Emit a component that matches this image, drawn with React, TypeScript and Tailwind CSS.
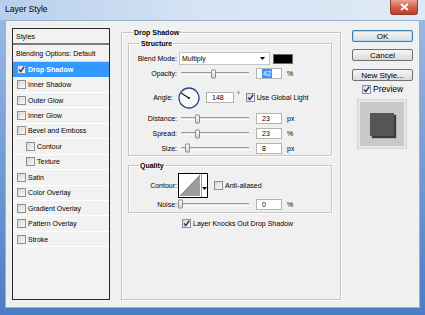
import React from "react";

const font = "font-['Liberation_Sans',Arial,sans-serif]";

function Check({ checked }: { checked?: boolean }) {
  return (
    <span className="flex h-[9px] w-[9px] shrink-0 items-center justify-center border border-[#8e8f8f] bg-gradient-to-br from-[#d6d6d6] to-[#fbfbfb]">
      {checked ? (
        <svg width="7" height="7" viewBox="0 0 7 7">
          <path d="M1 3.6 L2.8 5.6 L6.2 0.8" stroke="#22398c" strokeWidth="1.5" fill="none" />
        </svg>
      ) : null}
    </span>
  );
}

const styleItems = [
  { label: "Drop Shadow", checked: true, active: true },
  { label: "Inner Shadow" },
  { label: "Outer Glow" },
  { label: "Inner Glow" },
  { label: "Bevel and Emboss" },
  { label: "Contour", indent: true },
  { label: "Texture", indent: true },
  { label: "Satin" },
  { label: "Color Overlay" },
  { label: "Gradient Overlay" },
  { label: "Pattern Overlay" },
  { label: "Stroke" },
];

function StylesPanel() {
  return (
    <div className="flex h-[272px] w-[98px] shrink-0 flex-col border border-[#2b2b2b] bg-[#f2f2f2]">
      <div className="flex h-[16px] shrink-0 items-center border-b-2 border-[#7a7a7a] pl-[3px]">Styles</div>
      <div className="flex h-[17px] shrink-0 items-center border-b border-[#d9d9d9] pl-[3px]">Blending Options: Default</div>
      {styleItems.map((item) => (
        <div
          key={item.label}
          className={
            "flex h-[15.45px] shrink-0 items-center gap-[2px] " +
            (item.indent ? "pl-[13px] " : "pl-[4px] ") +
            (item.active ? "bg-[#3399ff] font-bold text-white" : "border-b border-white")
          }
        >
          <Check checked={item.checked} />
          <span>{item.label}</span>
        </div>
      ))}
    </div>
  );
}

function Slider({ pos }: { pos: number }) {
  return (
    <div className="relative flex h-full w-[72px] items-center px-[2px]">
      <div className="h-[3px] w-full border-t border-[#9a9a9a] border-b border-b-white bg-[#e4e4e4]" />
      <div
        className="absolute top-1/2 h-[9px] w-[5px] -translate-y-1/2 rounded-[1px] border border-[#8a8a8a] bg-gradient-to-b from-[#fdfdfd] to-[#d5d5d5]"
        style={{ left: pos }}
      />
    </div>
  );
}

function NumberBox({ value, width = 26, selected }: { value: string; width?: number; selected?: boolean }) {
  return (
    <div
      className="flex h-[11px] shrink-0 items-center border border-[#b3b3b3] bg-white pl-[5px] leading-[9px]"
      style={{ width }}
    >
      <span className={selected ? "bg-[#3399ff] px-[1px] text-white" : ""}>{value}</span>
    </div>
  );
}

function Label({ children, w = 48 }: { children: string; w?: number }) {
  return (
    <div className="shrink-0 text-right" style={{ width: w }}>
      {children}
    </div>
  );
}

function SliderRow({ label, pos, value, unit, h = 15 }: { label: string; pos: number; value: string; unit: string; h?: number }) {
  return (
    <div className="flex items-center" style={{ height: h }}>
      <Label>{label}</Label>
      <div className="ml-[2px] h-full">
        <Slider pos={pos} />
      </div>
      <div className="ml-[5px]">
        <NumberBox value={value} selected={label === "Opacity:"} />
      </div>
      <span className="ml-[5px]">{unit}</span>
    </div>
  );
}

const groupBox = "border border-[#c6c6c6] shadow-[inset_1px_1px_0_#fff,1px_1px_0_#fff]";

function DropShadowPanel() {
  return (
    <fieldset className={`ml-[11px] h-[272px] w-[220px] shrink-0 ${groupBox}`}>
      <legend className="ml-[11px] px-[1px] font-bold leading-[9px]">Drop Shadow</legend>

      <fieldset className={`ml-[6px] mt-[2px] w-[204px] pt-[3px] ${groupBox}`}>
        <legend className="ml-[11px] px-[1px] font-bold leading-[9px]">Structure</legend>

        <div className="flex h-[15px] items-center">
          <Label>Blend Mode:</Label>
          <div className="ml-[2px] flex h-[13px] w-[91px] items-center justify-between border border-[#c4c4c4] bg-white pl-[2px] pr-[4px]">
            <span>Multiply</span>
            <svg width="5" height="3" viewBox="0 0 5 3">
              <path d="M0 0 H5 L2.5 3 Z" fill="#000" />
            </svg>
          </div>
          <div className="ml-[3px] h-[10px] w-[20px] border border-[#6b6b6b] bg-black" />
        </div>

        <SliderRow label="Opacity:" pos={32} value="42" unit="%" />

        <div className="mt-[3px] flex h-[27px] items-center">
          <Label w={44}>Angle:</Label>
          <svg className="ml-[5px]" width="22" height="22" viewBox="0 0 22 22">
            <circle cx="11" cy="11" r="10" fill="#fafafa" stroke="#2b4a82" strokeWidth="1.3" />
            <line x1="11" y1="11" x2="3.4" y2="6.2" stroke="#111" strokeWidth="1.1" />
            <circle cx="11" cy="11" r="1" fill="#111" />
          </svg>
          <div className="ml-[6px]">
            <NumberBox value="148" width={28} />
          </div>
          <span className="ml-[3px] -translate-y-[3px]">°</span>
          <div className="ml-[6px] flex items-center gap-[2px]">
            <Check checked />
            <span>Use Global Light</span>
          </div>
        </div>

        <SliderRow label="Distance:" pos={16} value="23" unit="px" />
        <SliderRow label="Spread:" pos={16} value="23" unit="%" />
        <SliderRow label="Size:" pos={6} value="8" unit="px" h={14} />
      </fieldset>

      <fieldset className={`ml-[6px] mt-[5px] w-[204px] pb-[2px] pt-[2px] ${groupBox}`}>
        <legend className="ml-[10px] px-[1px] font-bold leading-[9px]">Quality</legend>

        <div className="flex h-[26px] items-center">
          <Label>Contour:</Label>
          <div className="ml-[1px] flex h-[25px] w-[30px] border border-black bg-white">
            <svg width="22" height="23" viewBox="0 0 22 23">
              <path d="M1 22 L21 1 L21 22 Z" fill="#9c9c9c" />
              <path d="M1 22 L21 1" stroke="#6a6a6a" strokeWidth="0.8" />
            </svg>
            <div className="flex flex-1 items-end justify-center border-l border-[#9a9a9a] pb-[7px]">
              <svg width="5" height="3" viewBox="0 0 5 3">
                <path d="M0 0 H5 L2.5 3 Z" fill="#000" />
              </svg>
            </div>
          </div>
          <div className="ml-[6px] flex items-center gap-[2px]">
            <Check />
            <span>Anti-aliased</span>
          </div>
        </div>

        <SliderRow label="Noise:" pos={-1} value="0" unit="%" h={12} />
      </fieldset>

      <div className="mt-[6px] flex h-[9px] items-center gap-[2px] pl-[60px]">
        <Check checked />
        <span>Layer Knocks Out Drop Shadow</span>
      </div>
    </fieldset>
  );
}

function Button({ children, focused }: { children: string; focused?: boolean }) {
  return (
    <div
      className={
        "flex h-[12px] w-[61px] items-center justify-center rounded-[2px] border bg-gradient-to-b from-[#f4f4f4] via-[#e9e9e9] to-[#d9d9d9] text-[8px] " +
        (focused ? "border-[#3c7fb1] shadow-[inset_0_0_0_1px_#a8dff5]" : "border-[#707070]")
      }
    >
      {children}
    </div>
  );
}

function RightColumn() {
  return (
    <div className="ml-[11px] mt-[2px] flex w-[61px] shrink-0 flex-col">
      <Button focused>OK</Button>
      <div className="mt-[7px]">
        <Button>Cancel</Button>
      </div>
      <div className="mt-[8px]">
        <Button>New Style...</Button>
      </div>
      <div className="ml-[10px] mt-[4px] flex h-[9px] items-center gap-[2px] text-[8.5px]">
        <Check checked />
        <span>Preview</span>
      </div>
      <div className="ml-[6px] mt-[6px] flex h-[48px] w-[48px] items-center justify-center border-2 border-[#e6e6e6] bg-[#c9c9c9] outline outline-1 outline-[#d4d4d4]">
        <div className="h-[23px] w-[24px] bg-[#555555] shadow-[2px_2px_1px_#3a3a3a]" />
      </div>
    </div>
  );
}

function TitleBar() {
  return (
    <div className="flex h-[20px] shrink-0 items-start justify-between bg-gradient-to-r from-[#b7cfec] via-[#d7e4f4] to-[#dfe9f6]">
      <span className="pl-[5px] pt-[4px] text-[8.5px] leading-[10px] text-black">Layer Style</span>
      <div className="mr-[7px] flex h-[15px] w-[28px] items-center justify-center rounded-b-[3px] border border-t-0 border-[#8c3a32] bg-gradient-to-b from-[#e8a493] via-[#d1614c] to-[#c23a25]">
        <svg width="9" height="8" viewBox="0 0 9 8">
          <path d="M1 1 L8 7 M8 1 L1 7" stroke="#fff" strokeWidth="1.8" />
        </svg>
      </div>
    </div>
  );
}

export default function App() {
  return (
    <div className={`flex h-[315px] w-[425px] flex-col overflow-hidden bg-gradient-to-b from-[#9dbde6] to-[#4b7dc3] text-[7px] leading-[9px] text-black ${font}`}>
      <TitleBar />
      <div className="mx-[5px] flex h-[288px] shrink-0 border border-[#9bb3d1] bg-[#f0f0f0] pl-[6px] pt-[7px]">
        <StylesPanel />
        <DropShadowPanel />
        <RightColumn />
      </div>
    </div>
  );
}
